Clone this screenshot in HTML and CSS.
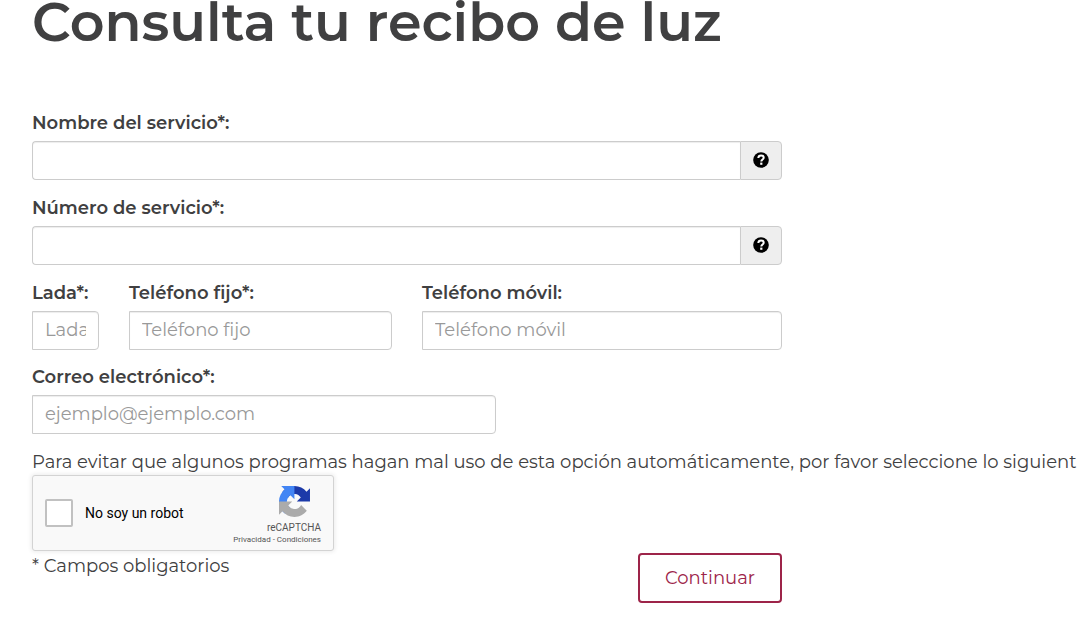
FILE: index.html
```html
<!DOCTYPE html>
<html lang="es">
<head>
    <meta charset="UTF-8">
    <meta name="viewport" content="width=device-width, initial-scale=1.0">
    <title>Consulta tu recibo de luz</title>
    <link rel="stylesheet" href="styles.css">
</head>
<body>
    <main class="container">
        <h1>Consulta tu recibo de luz</h1>

        <form class="form">
            <div class="form-group">
                <label for="nombre">Nombre del servicio*:</label>
                <div class="input-group">
                    <input type="text" id="nombre" class="form-control">
                    <button type="button" class="addon" aria-label="Ayuda">
                        <svg width="16" height="16" viewBox="0 0 16 16">
                            <circle cx="8" cy="8" r="7.800" fill="#000"/>
                            <path d="M5.300 6C5.400 4.200 6.500 3.500 8 3.500c1.700 0 2.700.9 2.700 2.200 0 1.800-2.400 1.800-2.400 3.800" fill="none" stroke="#fff" stroke-width="2"/>
                            <rect x="7.200" y="10.600" width="2.200" height="2.200" fill="#fff"/>
                        </svg>
                    </button>
                </div>
            </div>

            <div class="form-group">
                <label for="numero">Número de servicio*:</label>
                <div class="input-group">
                    <input type="text" id="numero" class="form-control">
                    <button type="button" class="addon" aria-label="Ayuda">
                        <svg width="16" height="16" viewBox="0 0 16 16">
                            <circle cx="8" cy="8" r="7.800" fill="#000"/>
                            <path d="M5.300 6C5.400 4.200 6.500 3.500 8 3.500c1.700 0 2.700.9 2.700 2.200 0 1.800-2.400 1.800-2.400 3.800" fill="none" stroke="#fff" stroke-width="2"/>
                            <rect x="7.200" y="10.600" width="2.200" height="2.200" fill="#fff"/>
                        </svg>
                    </button>
                </div>
            </div>

            <div class="phones">
                <div class="form-group">
                    <label for="lada">Lada*:</label>
                    <input type="tel" id="lada" class="form-control" placeholder="Lada">
                </div>
                <div class="form-group">
                    <label for="fijo">Teléfono fijo*:</label>
                    <input type="tel" id="fijo" class="form-control" placeholder="Teléfono fijo">
                </div>
                <div class="form-group">
                    <label for="movil">Teléfono móvil:</label>
                    <input type="tel" id="movil" class="form-control" placeholder="Teléfono móvil">
                </div>
            </div>

            <div class="form-group email">
                <label for="correo">Correo electrónico*:</label>
                <input type="email" id="correo" class="form-control" placeholder="ejemplo@ejemplo.com">
            </div>

            <p class="notice">Para evitar que algunos programas hagan mal uso de esta opción automáticamente, por favor seleccione lo siguient</p>

            <div class="captcha">
                <input type="checkbox" id="robot">
                <label for="robot">No soy un robot</label>
                <div class="captcha-brand">
                    <svg width="31" height="31" viewBox="0 0 64 64">
                        <path fill="#1c3aa9" d="M64 31.955l-.033-1.370V4.687l-7.160 7.160C50.948 4.674 42.033.093 32.050.093c-10.400 0-19.630 4.960-25.474 12.640l11.736 11.860a15.550 15.550 0 0 1 4.754-5.334c2.050-1.600 4.952-2.906 8.968-2.906.485 0 .86.057 1.135.163 4.976.393 9.288 3.140 11.828 7.124l-8.307 8.307L64 31.953"/>
                        <path fill="#4285f4" d="M31.862.094l-1.370.033H4.594l7.160 7.160C4.580 13.147 0 22.060 0 32.046c0 10.400 4.960 19.630 12.640 25.474L24.500 45.784a15.550 15.550 0 0 1-5.334-4.754c-1.600-2.050-2.906-4.952-2.906-8.968 0-.485.057-.86.163-1.135.393-4.976 3.140-9.288 7.124-11.828l8.307 8.307L31.860.095"/>
                        <path fill="#ababab" d="M.001 32.045l.033 1.370v25.898l7.160-7.160c5.860 7.173 14.774 11.754 24.760 11.754 10.400 0 19.630-4.960 25.474-12.640l-11.736-11.860a15.550 15.550 0 0 1-4.754 5.334c-2.050 1.600-4.952 2.906-8.968 2.906-.485 0-.86-.057-1.135-.163-4.976-.393-9.288-3.140-11.828-7.124l8.307-8.307c-10.522.04-22.400.066-27.295-.005"/>
                    </svg>
                    <span class="captcha-name">reCAPTCHA</span>
                    <span class="captcha-links"><a href="#">Privacidad</a> - <a href="#">Condiciones</a></span>
                </div>
            </div>

            <div class="form-footer">
                <span>* Campos obligatorios</span>
                <button type="submit" class="btn">Continuar</button>
            </div>
        </form>
    </main>
</body>
</html>
```
FILE: styles.css
```css
* {
    box-sizing: border-box;
}
body {
    margin: 0;
    background-color: #fff;
    color: #404041;
    font-family: Montserrat, Inter, sans-serif;
    font-size: 18px;
    line-height: 26px;
    overflow-x: hidden;
}
.container {
    padding: 0 32px;
}
h1 {
    margin: 0 0 66px;
    font-size: 54px;
    font-weight: 600;
    line-height: 44px;
}
.form {
    max-width: 750px;
}
.form-group {
    margin-bottom: 15px;
}
.form-group label {
    display: block;
    margin-bottom: 5px;
    font-weight: 600;
    white-space: nowrap;
}
.form-control {
    display: block;
    width: 100%;
    height: 39px;
    padding: 5px 12px 7px;
    border: 1px solid #ccc;
    border-radius: 0 4px 4px 0;
    background-color: #fff;
    box-shadow: inset 0 1px 1px rgba(0,0,0,0.075);
    color: #555;
    font-family: inherit;
    font-size: 18px;
}
.form-control::placeholder {
    color: #999;
    opacity: 1;
}
.input-group {
    display: flex;
}
.input-group .form-control {
    flex: 1;
    border-right: none;
    border-radius: 4px 0 0 4px;
}
.addon {
    display: flex;
    align-items: center;
    justify-content: center;
    width: 42px;
    padding: 0 0 1px;
    border: 1px solid #ccc;
    border-radius: 0 4px 4px 0;
    background-color: #eee;
    cursor: pointer;
}
.phones {
    display: grid;
    grid-template-columns: 67fr 263fr 360fr;
    gap: 30px;
}
.phones .form-group {
    min-width: 0;
    margin-bottom: 14px;
}
.email {
    max-width: 464px;
}
.notice {
    margin: 0;
    white-space: nowrap;
}
.captcha {
    display: flex;
    align-items: center;
    width: 302px;
    height: 76px;
    padding: 0 12px;
    border: 1px solid #d3d3d3;
    border-radius: 3px;
    background-color: #f9f9f9;
    box-shadow: 0 0 4px 1px rgba(0,0,0,0.08);
    color: #000;
    font-family: Roboto, sans-serif;
    font-size: 14px;
}
.captcha input {
    appearance: none;
    width: 28px;
    height: 28px;
    margin: 0 12px 0 0;
    border: 2px solid #c1c1c1;
    border-radius: 2px;
    background-color: #fff;
}
.captcha-brand {
    display: flex;
    flex-direction: column;
    align-items: flex-end;
    align-self: flex-end;
    margin-left: auto;
    padding-bottom: 4px;
    color: #555;
}
.captcha-brand svg {
    margin-right: 11px;
}
.captcha-name {
    margin-top: 5px;
    font-size: 10px;
    line-height: 12px;
}
.captcha-links {
    font-size: 8px;
    line-height: 12px;
}
.captcha-links a {
    color: #555;
    text-decoration: none;
}
.form-footer {
    display: flex;
    justify-content: space-between;
    align-items: flex-start;
    margin-top: 2px;
    padding-bottom: 28px;
}
.btn {
    height: 50px;
    padding: 0 25px;
    border: 2px solid #9d2449;
    border-radius: 4px;
    background-color: #fff;
    color: #9d2449;
    font-family: inherit;
    font-size: 18px;
    cursor: pointer;
}
```
